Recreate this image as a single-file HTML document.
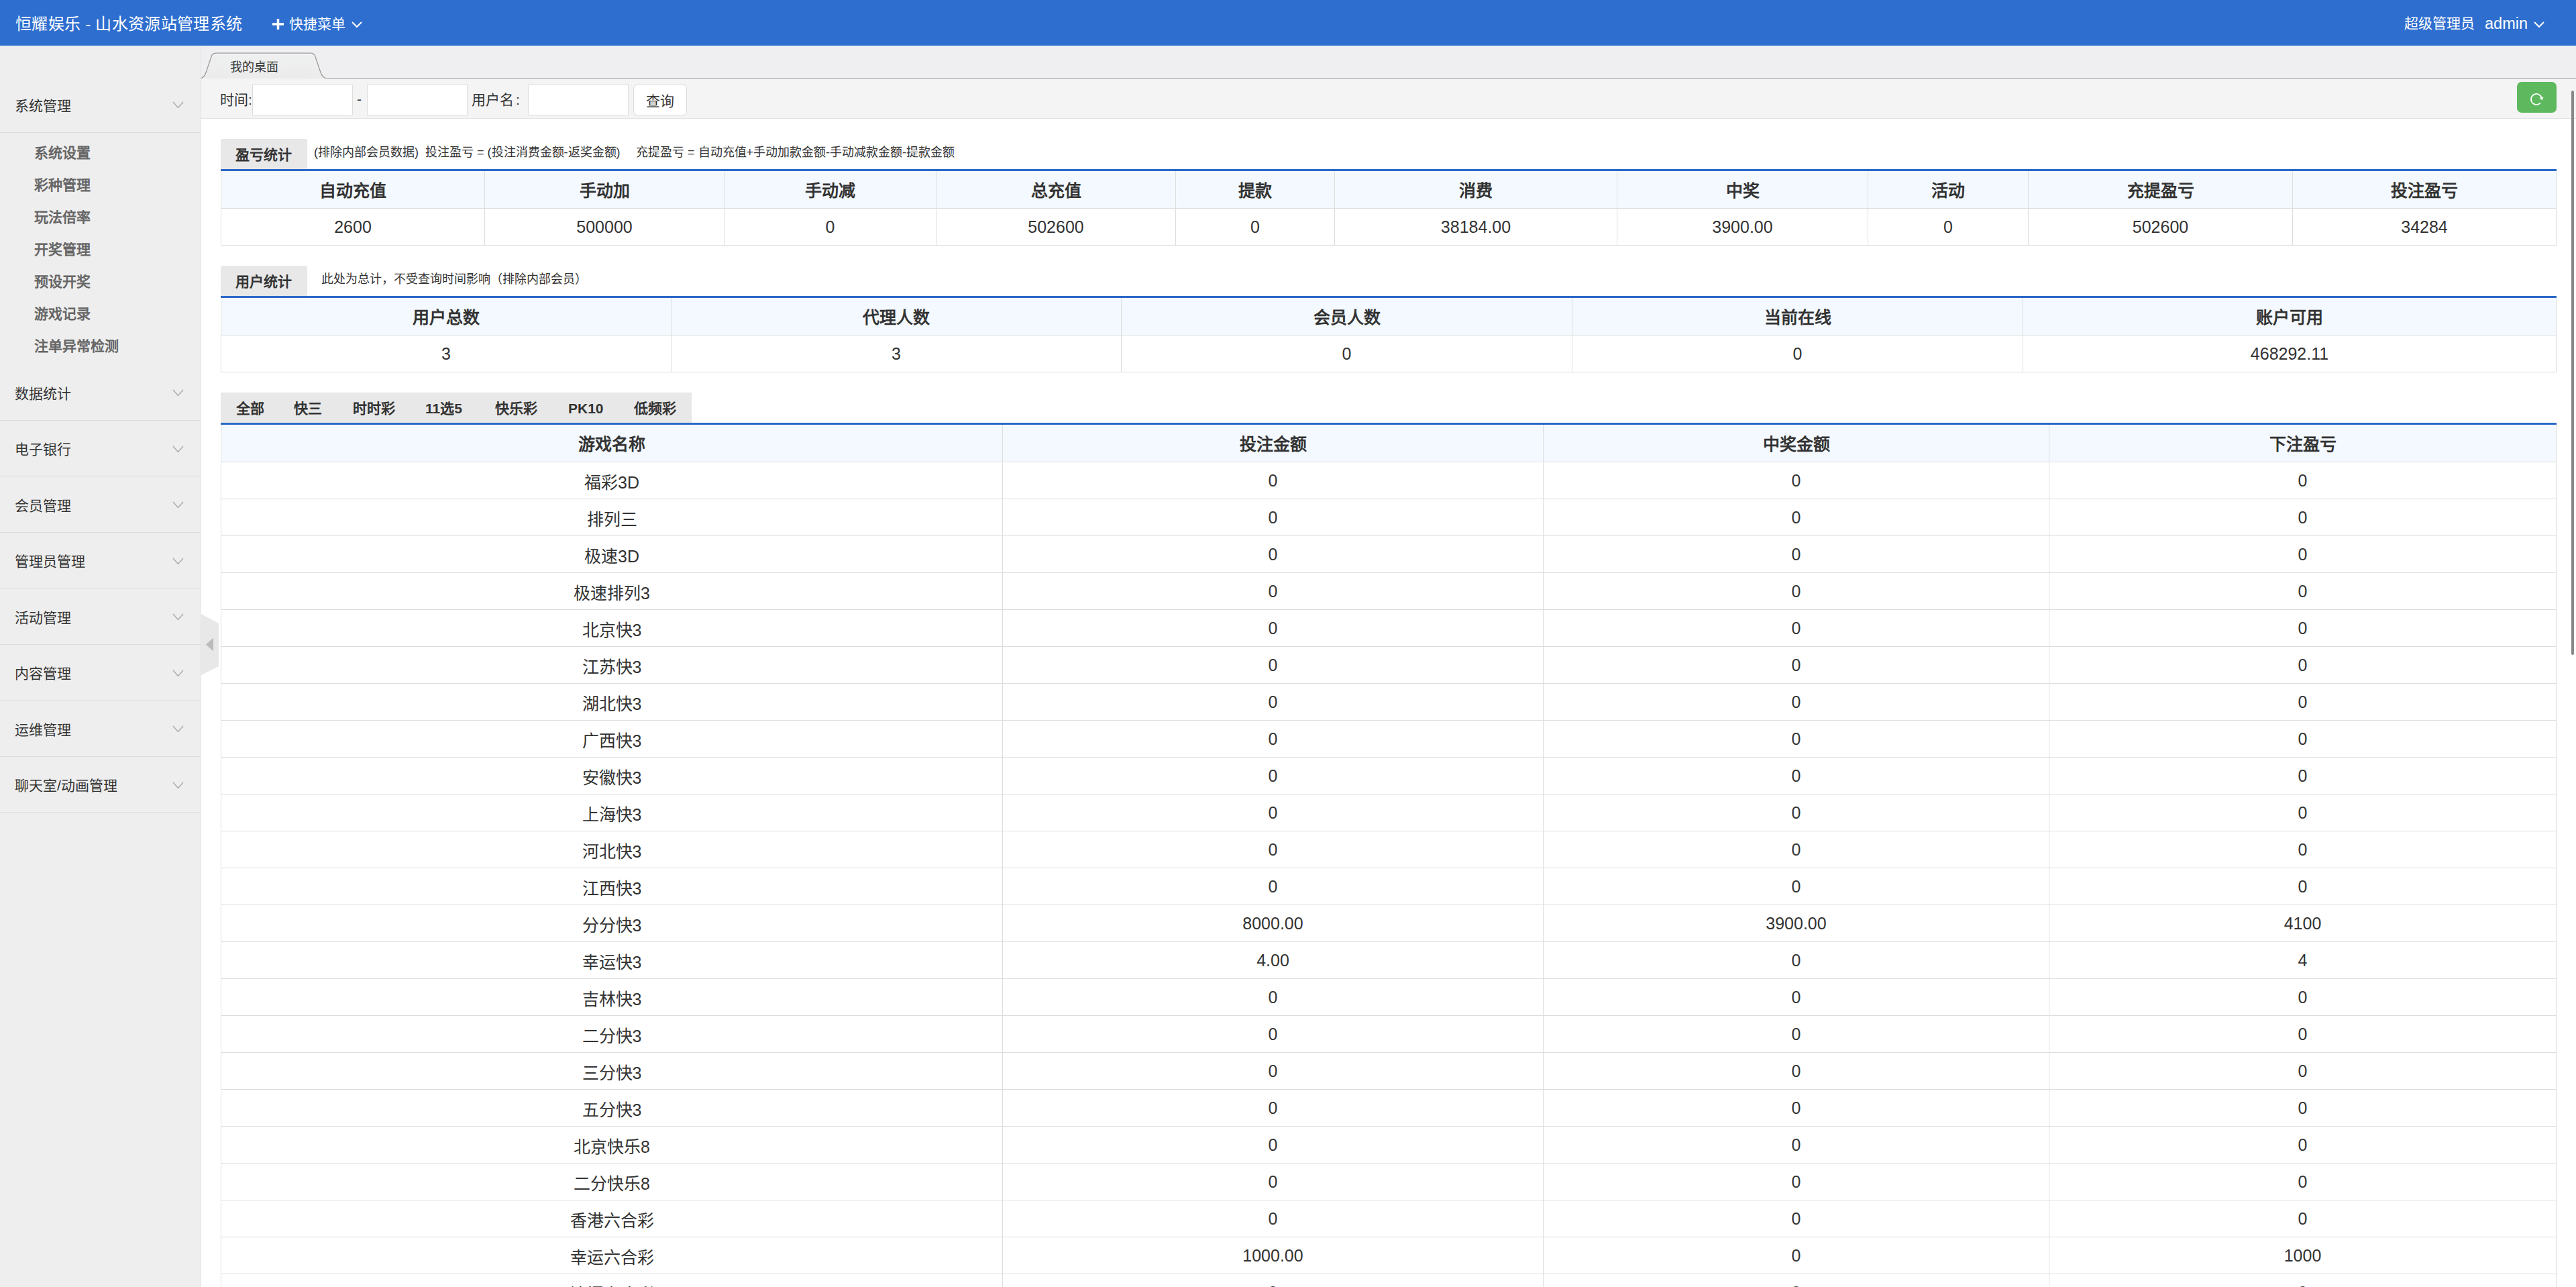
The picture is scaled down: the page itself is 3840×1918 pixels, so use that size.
<!DOCTYPE html>
<html lang="zh-CN">
<head>
<meta charset="utf-8">
<title>恒耀娱乐 - 山水资源站管理系统</title>
<style>
*{margin:0;padding:0;box-sizing:border-box}
html,body{width:3840px;height:1918px;overflow:hidden;background:#fff;font-family:"Liberation Sans",sans-serif;color:#333}
#hd{position:absolute;left:0;top:0;width:3840px;height:68px;background:#2e6ecf;color:#fff}
#hd div{position:absolute;top:0;height:68px;line-height:68px;white-space:nowrap}
#hd .t{left:23px;top:2px;font-size:24px;letter-spacing:0.3px}
#hd .q{left:431px;top:1.5px;font-size:21px}
#hd .u{left:3584px;top:1px;font-size:21px}
#hd svg{position:absolute}
#side{position:absolute;left:0;top:68px;width:300px;height:1850px;background:#eee;border-right:1px solid #e3e3e3}
.dt{position:absolute;left:0;width:299px;border-bottom:1px solid #dcdcdc;font-size:21px;color:#333}
.dt>span{position:absolute;left:22px;white-space:nowrap;margin-top:1.5px}
.dt svg{position:absolute;left:257px}
.dd{position:absolute;left:51px;font-size:21px;font-weight:bold;color:#666;white-space:nowrap;height:48px;line-height:48px}
#tabbar{position:absolute;left:300px;top:68px;width:3540px;height:49px;background:#efeff1}
#tool{position:absolute;left:300px;top:117px;width:3540px;height:60px;background:#f4f4f4;border-bottom:1px solid #e2e2e2}
.inp{position:absolute;top:126px;height:46px;background:#fff;border:1px solid #ddd}
.lbl{position:absolute;top:119px;line-height:59px;font-size:21px;color:#333;white-space:nowrap}
.btn{position:absolute;left:944px;top:126px;width:80px;height:46px;background:#fff;border:1px solid #ddd;border-radius:6px;font-size:21px;line-height:48px;text-align:center;color:#333}
.gbtn{position:absolute;left:3752px;top:122px;width:59px;height:46px;background:#5eb95e;border-radius:7px}
.sec{position:absolute;left:329px;height:45px;background:#e8e8e8;font-size:21px;font-weight:bold;color:#333;line-height:48px;white-space:nowrap}
.note{position:absolute;font-size:18px;color:#333;white-space:nowrap;line-height:40px;height:45px}
.blue{position:absolute;left:329px;width:3482px;height:3px;background:#2b68c9}
table{position:absolute;left:329px;border-collapse:collapse;table-layout:fixed;font-size:25px;color:#333}
td,th{border:1px solid #ddd;text-align:center;white-space:nowrap;padding:0;overflow:hidden}
th{background:#f3f9fe;font-weight:bold;height:55px;border-top:0}
td{height:55px;padding-top:2px}
#scroll{position:absolute;left:3833px;top:135px;width:4px;height:841px;background:#888;border-radius:2px}
#handle{position:absolute;left:300px;top:915px}
.nocjk .c{font-size:1.2em;letter-spacing:.0417em;vertical-align:-.05em;line-height:0;-webkit-text-stroke:2px currentColor}
</style>
<script>(function(){var w=window.innerWidth;if(w&&Math.abs(w-3840)>4){document.documentElement.style.zoom=w/3840;}})();</script>
</head>
<body>
<div id="hd"><div class="t"><span class="c">恒耀娱乐</span> - <span class="c">山水资源站管理系统</span></div><svg style="left:406px;top:28px" width="17" height="16" viewBox="0 0 17 16"><path d="M8.5 0v16M0 8h17" stroke="#fff" stroke-width="3.5"/></svg><div class="q"><span class="c">快捷菜单</span></div><svg style="left:524px;top:32px" width="16" height="10" viewBox="0 0 16 10"><path d="M1 1l7 7 7-7" fill="none" stroke="#fff" stroke-width="2"/></svg><div class="u"><span class="c">超级管理员</span></div><div class="u" style="left:3704px;font-size:23.5px;top:1px">admin</div><svg style="left:3777px;top:32px" width="16" height="10" viewBox="0 0 16 10"><path d="M1 1l7 7 7-7" fill="none" stroke="#fff" stroke-width="2"/></svg></div>
<div id="side"><div class="dt" style="top:46px;height:84px"><span style="top:0;line-height:83px"><span class="c">系统管理</span></span><svg style="top:37px" width="17" height="11" viewBox="0 0 17 11"><path d="M1 1l7.5 8.5 7.5-8.5" fill="none" stroke="#aaa" stroke-width="1.4"/></svg></div><div class="dd" style="top:136px"><span class="c">系统设置</span></div><div class="dd" style="top:184px"><span class="c">彩种管理</span></div><div class="dd" style="top:232px"><span class="c">玩法倍率</span></div><div class="dd" style="top:280px"><span class="c">开奖管理</span></div><div class="dd" style="top:328px"><span class="c">预设开奖</span></div><div class="dd" style="top:376px"><span class="c">游戏记录</span></div><div class="dd" style="top:424px"><span class="c">注单异常检测</span></div><div class="dt" style="top:475px;height:84px"><span style="top:0;line-height:83px"><span class="c">数据统计</span></span><svg style="top:37px" width="17" height="11" viewBox="0 0 17 11"><path d="M1 1l7.5 8.5 7.5-8.5" fill="none" stroke="#aaa" stroke-width="1.4"/></svg></div><div class="dt" style="top:559px;height:83px"><span style="top:0;line-height:82px"><span class="c">电子银行</span></span><svg style="top:37px" width="17" height="11" viewBox="0 0 17 11"><path d="M1 1l7.5 8.5 7.5-8.5" fill="none" stroke="#aaa" stroke-width="1.4"/></svg></div><div class="dt" style="top:642px;height:84px"><span style="top:0;line-height:83px"><span class="c">会员管理</span></span><svg style="top:37px" width="17" height="11" viewBox="0 0 17 11"><path d="M1 1l7.5 8.5 7.5-8.5" fill="none" stroke="#aaa" stroke-width="1.4"/></svg></div><div class="dt" style="top:726px;height:83px"><span style="top:0;line-height:82px"><span class="c">管理员管理</span></span><svg style="top:37px" width="17" height="11" viewBox="0 0 17 11"><path d="M1 1l7.5 8.5 7.5-8.5" fill="none" stroke="#aaa" stroke-width="1.4"/></svg></div><div class="dt" style="top:809px;height:84px"><span style="top:0;line-height:83px"><span class="c">活动管理</span></span><svg style="top:37px" width="17" height="11" viewBox="0 0 17 11"><path d="M1 1l7.5 8.5 7.5-8.5" fill="none" stroke="#aaa" stroke-width="1.4"/></svg></div><div class="dt" style="top:893px;height:83px"><span style="top:0;line-height:82px"><span class="c">内容管理</span></span><svg style="top:37px" width="17" height="11" viewBox="0 0 17 11"><path d="M1 1l7.5 8.5 7.5-8.5" fill="none" stroke="#aaa" stroke-width="1.4"/></svg></div><div class="dt" style="top:976px;height:84px"><span style="top:0;line-height:83px"><span class="c">运维管理</span></span><svg style="top:37px" width="17" height="11" viewBox="0 0 17 11"><path d="M1 1l7.5 8.5 7.5-8.5" fill="none" stroke="#aaa" stroke-width="1.4"/></svg></div><div class="dt" style="top:1060px;height:83px"><span style="top:0;line-height:82px"><span class="c">聊天室</span>/<span class="c">动画管理</span></span><svg style="top:37px" width="17" height="11" viewBox="0 0 17 11"><path d="M1 1l7.5 8.5 7.5-8.5" fill="none" stroke="#aaa" stroke-width="1.4"/></svg></div></div>
<svg id="handle" width="27" height="92" viewBox="0 0 27 92"><path d="M0 0L26 14V78L0 91Z" fill="#e8e8e8"/><path d="M7 45.5L18 35.5V55.5Z" fill="#bbb"/></svg>
<div id="tabbar"></div><svg style="position:absolute;left:300px;top:68px" width="3540" height="50" viewBox="0 0 3540 50"><defs><linearGradient id="tg" x1="0" y1="0" x2="0" y2="1"><stop offset="0" stop-color="#eff1f0"/><stop offset="1" stop-color="#ebebeb"/></linearGradient></defs><path d="M0 48.5C3 47.5 5 45.5 7 40L15.5 15C17 11.8 18.5 11 22 11H163C166.5 11 168 11.8 169.5 15L178 40C180 45.5 182 47.5 185.5 48.5H3540V50H0Z" fill="url(#tg)"/><path d="M0 48.5C3 47.5 5 45.5 7 40L15.5 15C17 11.8 18.5 11 22 11H163C166.5 11 168 11.8 169.5 15L178 40C180 45.5 182 47.5 185.5 48.5H3540" fill="none" stroke="#999" stroke-width="1.25"/><path d="M21 12.6H164" stroke="#fff" stroke-width="1"/></svg><div style="position:absolute;left:343px;top:80px;height:39px;line-height:40px;font-size:18px;color:#333;white-space:nowrap"><span class="c">我的桌面</span></div>
<div id="tool"></div><div class="lbl" style="left:328px"><span class="c">时间</span>:</div><div class="inp" style="left:376px;width:150px"></div><div class="lbl" style="left:532px;top:117.5px">-</div><div class="inp" style="left:547px;width:150px"></div><div class="lbl" style="left:703px"><span class="c">用户名</span><span style="margin-left:3px">:</span></div><div class="inp" style="left:787px;width:150px"></div><div class="btn"><span class="c">查询</span></div><div class="gbtn"><svg style="position:absolute;left:0;top:0" width="59" height="46" viewBox="0 0 59 46"><path d="M36.88 24.61A8 8 0 1 0 34.95 31.35" fill="none" stroke="#fff" stroke-width="1.7"/><path d="M37.40 27.57L39.57 22.61L33.66 23.65Z" fill="#fff"/></svg></div>
<div class="sec" style="top:207px;width:129px;padding-left:22px"><span class="c">盈亏统计</span></div><div class="note" style="left:468px;top:207px">(<span class="c">排除内部会员数据</span>)</div><div class="note" style="left:634px;top:207px"><span class="c">投注盈亏</span> = (<span class="c">投注消费金额</span>-<span class="c">返奖金额</span>)</div><div class="note" style="left:948px;top:207px"><span class="c">充提盈亏</span> = <span class="c">自动充值</span>+<span class="c">手动加款金额</span>-<span class="c">手动减款金额</span>-<span class="c">提款金额</span></div><div class="blue" style="top:252px"></div><table style="top:255px;width:3482px"><colgroup><col style="width:393px"><col style="width:357px"><col style="width:316px"><col style="width:357px"><col style="width:237px"><col style="width:421px"><col style="width:374px"><col style="width:239px"><col style="width:394px"><col style="width:393px"></colgroup><tr><th><span class="c">自动充值</span></th><th><span class="c">手动加</span></th><th><span class="c">手动减</span></th><th><span class="c">总充值</span></th><th><span class="c">提款</span></th><th><span class="c">消费</span></th><th><span class="c">中奖</span></th><th><span class="c">活动</span></th><th><span class="c">充提盈亏</span></th><th><span class="c">投注盈亏</span></th></tr><tr><td>2600</td><td>500000</td><td>0</td><td>502600</td><td>0</td><td>38184.00</td><td>3900.00</td><td>0</td><td>502600</td><td>34284</td></tr></table>
<div class="sec" style="top:396px;width:129px;padding-left:22px"><span class="c">用户统计</span></div><div class="note" style="left:479px;top:396px"><span class="c">此处为总计，不受查询时间影响（排除内部会员）</span></div><div class="blue" style="top:441px"></div><table style="top:444px;width:3482px"><colgroup><col style="width:671px"><col style="width:671px"><col style="width:672px"><col style="width:672px"><col style="width:795px"></colgroup><tr><th><span class="c">用户总数</span></th><th><span class="c">代理人数</span></th><th><span class="c">会员人数</span></th><th><span class="c">当前在线</span></th><th><span class="c">账户可用</span></th></tr><tr><td>3</td><td>3</td><td>0</td><td>0</td><td>468292.11</td></tr></table>
<div class="sec" style="top:585px;width:702px;padding-left:0"><span style="position:absolute;left:23px"><span class="c">全部</span></span><span style="position:absolute;left:109px"><span class="c">快三</span></span><span style="position:absolute;left:197px"><span class="c">时时彩</span></span><span style="position:absolute;left:305px">11<span class="c">选</span>5</span><span style="position:absolute;left:409px"><span class="c">快乐彩</span></span><span style="position:absolute;left:518px">PK10</span><span style="position:absolute;left:616px"><span class="c">低频彩</span></span></div><div class="blue" style="top:630px"></div><table style="top:633px;width:3482px"><colgroup><col style="width:1165px"><col style="width:806px"><col style="width:754px"><col style="width:756px"></colgroup><tr><th><span class="c">游戏名称</span></th><th><span class="c">投注金额</span></th><th><span class="c">中奖金额</span></th><th><span class="c">下注盈亏</span></th></tr><tr><td><span class="c">福彩</span>3D</td><td>0</td><td>0</td><td>0</td></tr><tr><td><span class="c">排列三</span></td><td>0</td><td>0</td><td>0</td></tr><tr><td><span class="c">极速</span>3D</td><td>0</td><td>0</td><td>0</td></tr><tr><td><span class="c">极速排列</span>3</td><td>0</td><td>0</td><td>0</td></tr><tr><td><span class="c">北京快</span>3</td><td>0</td><td>0</td><td>0</td></tr><tr><td><span class="c">江苏快</span>3</td><td>0</td><td>0</td><td>0</td></tr><tr><td><span class="c">湖北快</span>3</td><td>0</td><td>0</td><td>0</td></tr><tr><td><span class="c">广西快</span>3</td><td>0</td><td>0</td><td>0</td></tr><tr><td><span class="c">安徽快</span>3</td><td>0</td><td>0</td><td>0</td></tr><tr><td><span class="c">上海快</span>3</td><td>0</td><td>0</td><td>0</td></tr><tr><td><span class="c">河北快</span>3</td><td>0</td><td>0</td><td>0</td></tr><tr><td><span class="c">江西快</span>3</td><td>0</td><td>0</td><td>0</td></tr><tr><td><span class="c">分分快</span>3</td><td>8000.00</td><td>3900.00</td><td>4100</td></tr><tr><td><span class="c">幸运快</span>3</td><td>4.00</td><td>0</td><td>4</td></tr><tr><td><span class="c">吉林快</span>3</td><td>0</td><td>0</td><td>0</td></tr><tr><td><span class="c">二分快</span>3</td><td>0</td><td>0</td><td>0</td></tr><tr><td><span class="c">三分快</span>3</td><td>0</td><td>0</td><td>0</td></tr><tr><td><span class="c">五分快</span>3</td><td>0</td><td>0</td><td>0</td></tr><tr><td><span class="c">北京快乐</span>8</td><td>0</td><td>0</td><td>0</td></tr><tr><td><span class="c">二分快乐</span>8</td><td>0</td><td>0</td><td>0</td></tr><tr><td><span class="c">香港六合彩</span></td><td>0</td><td>0</td><td>0</td></tr><tr><td><span class="c">幸运六合彩</span></td><td>1000.00</td><td>0</td><td>1000</td></tr><tr><td><span class="c">澳门六合彩</span></td><td>0</td><td>0</td><td>0</td></tr></table>
<div id="scroll"></div>
<script>(function(){var s=document.createElement("span");s.style.cssText="position:absolute;left:0;top:0;visibility:hidden;font-size:100px;white-space:nowrap;font-family:\"Liberation Sans\",sans-serif";s.textContent="中文中文";document.body.appendChild(s);var w=s.getBoundingClientRect().width;document.body.removeChild(s);if(w>0&&w<370){document.documentElement.className+=" nocjk";}})();</script>
</body>
</html>
